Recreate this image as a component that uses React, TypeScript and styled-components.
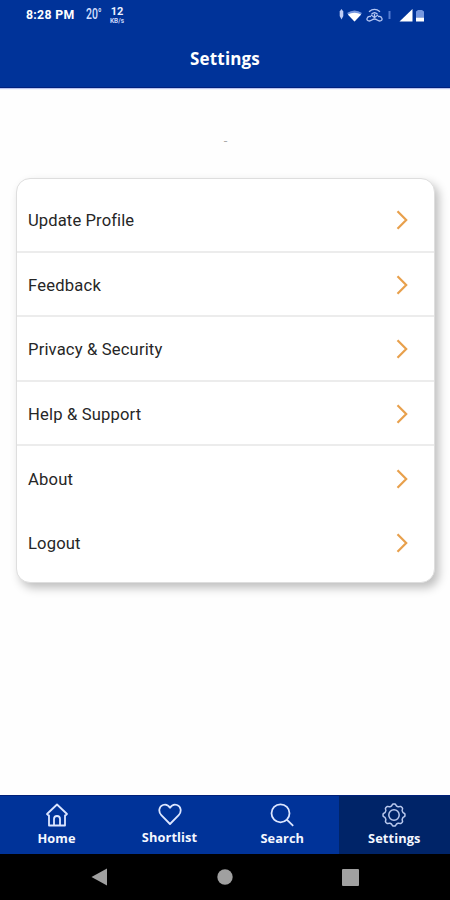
import React from "react";
import styled, { createGlobalStyle } from "styled-components";

const Global = createGlobalStyle`
  * { box-sizing: border-box; }
  body { margin: 0; background: #fefefe; }
  svg { display: block; flex: none; }
`;

const Screen = styled.div`
  width: 450px;
  height: 900px;
  display: flex;
  flex-direction: column;
  overflow: hidden;
  background: #fefefe;
  font-family: Roboto, sans-serif;
`;

const Header = styled.header`
  height: 88px;
  flex: none;
  background: #003399;
  border-bottom: 1px solid #00207c;
  box-shadow: 0 1px 1px #b9c3ee;
  color: #fff;
`;

const StatusBar = styled.div`
  height: 30px;
  padding: 0 25px 0 26px;
  display: flex;
  align-items: center;
  justify-content: space-between;
`;

const StatusGroup = styled.div`
  display: flex;
  align-items: center;
`;

const Clock = styled.span`
  width: 60px;
  font: 700 12.3px/16px Roboto, sans-serif;
  letter-spacing: 0.3px;
  white-space: nowrap;
`;

const Temperature = styled.span`
  width: 22px;
  font: 500 14.5px/16px Roboto, sans-serif;
  color: #d5e0ff;
  transform: scaleX(0.72);
  transform-origin: left;
`;

const Speed = styled.span`
  width: 18px;
  display: flex;
  flex-direction: column;
  align-items: center;
  color: #edf2ff;
`;

const SpeedValue = styled.span`
  font: 700 11px/13px Roboto, sans-serif;
`;

const SpeedUnit = styled.span`
  font: 700 6.5px/7px Roboto, sans-serif;
  color: #c5d3fa;
`;

const Title = styled.h1`
  margin: 17px 0 0;
  text-align: center;
  font: 700 17px/24px "Open Sans", sans-serif;
  letter-spacing: 0.15px;
`;

const Main = styled.main`
  flex: 1;
  display: flex;
  flex-direction: column;
  padding: 43px 15px 0 16px;
`;

const UserName = styled.div`
  height: 20px;
  margin-bottom: 27px;
  text-align: center;
  color: #aaa;
  font: 400 13px/20px Roboto, sans-serif;
`;

const Card = styled.section`
  height: 405px;
  padding-top: 9px;
  border: 1px solid #dedede;
  border-radius: 14px;
  background: #fff;
  box-shadow: 4px 5px 10px rgba(0, 0, 0, 0.25);
`;

const Row = styled.div<{ $divider: boolean }>`
  height: 64.6px;
  padding: ${(p) => (p.$divider ? 2 : 0)}px 26px 0 11px;
  display: flex;
  align-items: center;
  justify-content: space-between;
  border-bottom: ${(p) => (p.$divider ? "2px solid #ececec" : "none")};
`;

const RowLabel = styled.span<{ $spacing: number }>`
  padding-top: 2px;
  font: 400 16.6px/22px Roboto, sans-serif;
  letter-spacing: ${(p) => p.$spacing}px;
  color: #262626;
`;

const TabBar = styled.nav`
  height: 59px;
  flex: none;
  display: grid;
  grid-template-columns: 113px 113px 112.5px 111.5px;
  background: #003399;
  border-top: 1px solid #002079;
`;

const Tab = styled.div<{ $active?: boolean; $raised?: boolean }>`
  display: flex;
  flex-direction: column;
  align-items: center;
  padding-top: ${(p) => (p.$raised ? 6 : 7)}px;
  background: ${(p) => (p.$active ? "#002468" : "transparent")};
  color: ${(p) => (p.$active ? "#b9c9ee" : "#dce6ff")};
`;

const TabLabel = styled.span`
  margin-top: 3px;
  color: #f4f7ff;
  font: 700 12.8px/17px "Open Sans", sans-serif;
  letter-spacing: 0.1px;
`;

const SystemBar = styled.footer`
  height: 46px;
  flex: none;
  display: flex;
  align-items: center;
  justify-content: space-between;
  padding: 0 91px;
  background: #000;
`;

const Chevron = () => (
  <svg width="12" height="20" viewBox="0 0 12 20" fill="none" stroke="#e8a04c" strokeWidth="2.200">
    <path d="M1.500 1.300 10.200 10 1.500 18.700" />
  </svg>
);

const HomeIcon = () => (
  <svg width="24" height="24" viewBox="0 0 24 24" fill="none" stroke="currentColor" strokeWidth="1.8" strokeLinejoin="round" strokeLinecap="round">
    <path d="M2 11 12 1.500 22 11l-1.500 1.400h-.5v10.100H4V12.400h-.5Z" />
    <path d="M9 22v-6a3 3 0 0 1 6 0v6" />
  </svg>
);

const HeartIcon = () => (
  <svg width="24" height="24" viewBox="0 0 24 24" fill="none" stroke="currentColor" strokeWidth="1.8" strokeLinejoin="round">
    <path d="M12 22 3.300 13.100C-.1 9.500 1.200 4.200 5 3c3-1 5.300.1 7 2.800C13.700 3.100 16 2 19 3c3.800 1.200 5.100 6.500 1.700 10.100Z" />
  </svg>
);

const SearchIcon = () => (
  <svg width="24" height="24" viewBox="0 0 24 24" fill="none" stroke="currentColor" strokeWidth="1.8">
    <circle cx="10.500" cy="10.300" r="9" />
    <path d="m16.800 16.600 6.400 6.200" />
  </svg>
);

const gearOutline = Array.from({ length: 96 }, (_, i) => {
  const angle = (i / 96) * Math.PI * 2;
  const radius = 10.1 + 0.9 * Math.tanh(2 * Math.cos(angle * 8));
  return `${(12 + radius * Math.cos(angle)).toFixed(2)},${(12 + radius * Math.sin(angle)).toFixed(2)}`;
}).join(" ");

const GearIcon = () => (
  <svg width="24" height="24" viewBox="0 0 24 24" fill="none" stroke="currentColor" strokeWidth="1.5" strokeLinejoin="round">
    <polygon points={gearOutline} />
    <circle cx="12" cy="12" r="5.200" />
  </svg>
);

const StatusIcons = () => (
  <svg width="87" height="18" viewBox="0 0 87 18" fill="none">
    <path d="m3.500 3 1.800 2.500v4.500L3.500 13.500 1.700 10V5.500Z" fill="#bfcdf5" />
    <path d="M9 7Q16.500 2 24 7L16.500 15.500Z" fill="#7597df" />
    <path d="M9.800 8.500Q16.500 5 23.200 8.500L16.500 15.500Z" fill="#fff" />
    <g stroke="#b2c5f3" strokeWidth="1.300">
      <path d="M31 5.700q5.500-4.500 11 0M33.500 8.300q3-3 6 0M36.500 8v3.500" />
      <path d="M33 10.500c-4-1-6 4.500-1.500 4.500 2 0 2.700-2 5-2s3 2 5 2c4.500 0 2.500-5.500-1.500-4.500" />
      <path d="m33 9 3.500 2.500L40 9" />
    </g>
    <path d="M51.500 5v8" stroke="#527bd0" strokeWidth="2" />
    <path d="M61.500 15.500 74.500 3v12.500Z" fill="#fff" />
    <path d="M78 5.500 80 4h4l2 1.500V11.500H78Z" fill="#7597df" />
    <path d="M78 11.500h8v4h-8Z" fill="#fff" />
  </svg>
);

const rows = [
  { label: "Update Profile", spacing: 0.1 },
  { label: "Feedback", spacing: 0.2 },
  { label: "Privacy & Security", spacing: 0.16 },
  { label: "Help & Support", spacing: 0.16 },
  { label: "About", spacing: 0.2 },
  { label: "Logout", spacing: 0.15 },
];

export default function App() {
  return (
    <Screen>
      <Global />
      <Header>
        <StatusBar>
          <StatusGroup>
            <Clock>8:28 PM</Clock>
            <Temperature>20°</Temperature>
            <Speed>
              <SpeedValue>12</SpeedValue>
              <SpeedUnit>KB/s</SpeedUnit>
            </Speed>
          </StatusGroup>
          <StatusIcons />
        </StatusBar>
        <Title>Settings</Title>
      </Header>
      <Main>
        <UserName>-</UserName>
        <Card>
          {rows.map((row, i) => (
            <Row key={row.label} $divider={i < 4}>
              <RowLabel $spacing={row.spacing}>{row.label}</RowLabel>
              <Chevron />
            </Row>
          ))}
        </Card>
      </Main>
      <TabBar>
        <Tab>
          <HomeIcon />
          <TabLabel>Home</TabLabel>
        </Tab>
        <Tab $raised>
          <HeartIcon />
          <TabLabel>Shortlist</TabLabel>
        </Tab>
        <Tab>
          <SearchIcon />
          <TabLabel>Search</TabLabel>
        </Tab>
        <Tab $active>
          <GearIcon />
          <TabLabel>Settings</TabLabel>
        </Tab>
      </TabBar>
      <SystemBar>
        <svg width="17" height="18" viewBox="0 0 17 18"><path d="M.5 9 16 .5v17Z" fill="#a0a0a0" /></svg>
        <svg width="16" height="16" viewBox="0 0 16 16"><circle cx="8" cy="8" r="7.700" fill="#a0a0a0" /></svg>
        <svg width="17" height="17" viewBox="0 0 17 17"><rect width="17" height="17" rx="1" fill="#a0a0a0" /></svg>
      </SystemBar>
    </Screen>
  );
}
